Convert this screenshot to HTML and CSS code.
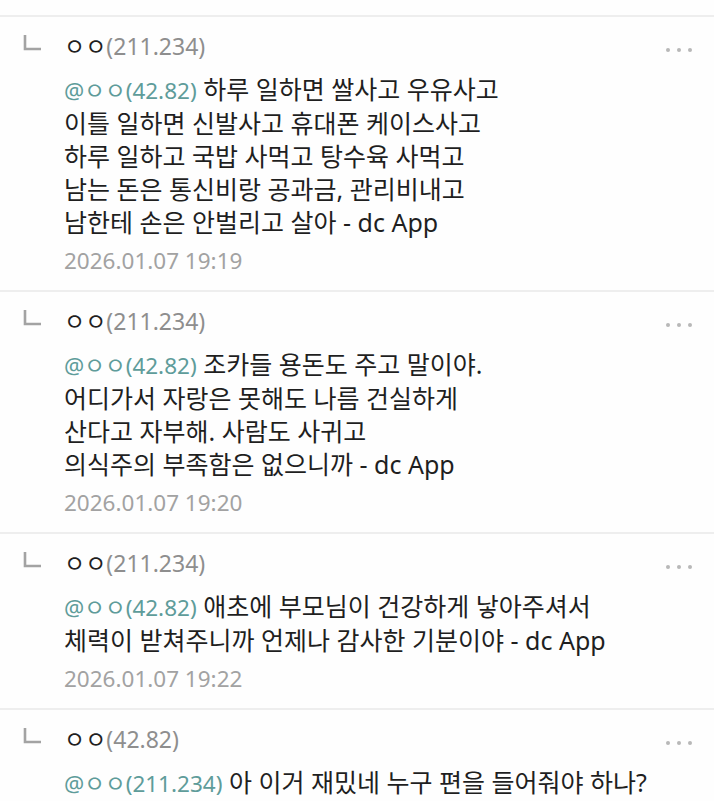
FILE: index.html
```html
<!DOCTYPE html>
<html lang="ko">
<head>
    <meta charset="UTF-8">
    <meta name="viewport" content="width=device-width, initial-scale=1.0">
    <title>댓글</title>
    <link rel="stylesheet" href="styles.css">
</head>
<body>
    <div class="prev-end"></div>

    <div class="comment">
        <svg class="reply-mark" width="20" height="18" viewBox="0 0 20 18">
            <path d="M3 1 V15 H19" fill="none" stroke="#a3a3a3" stroke-width="2.6"/>
        </svg>
        <div class="comment-main">
            <div class="comment-head">
                <div class="writer"><span class="nick">ㅇㅇ</span><span class="ip">(211.234)</span></div>
                <div class="more"><span></span><span></span><span></span></div>
            </div>
            <div class="comment-text">
                <span class="mention">@ㅇㅇ(42.82)</span> 하루 일하면 쌀사고 우유사고<br>
                이틀 일하면 신발사고 휴대폰 케이스사고<br>
                하루 일하고 국밥 사먹고 탕수육 사먹고<br>
                남는 돈은 통신비랑 공과금, 관리비내고<br>
                남한테 손은 안벌리고 살아 - dc App
            </div>
            <div class="comment-date">2026.01.07 19:19</div>
        </div>
    </div>

    <div class="comment">
        <svg class="reply-mark" width="20" height="18" viewBox="0 0 20 18">
            <path d="M3 1 V15 H19" fill="none" stroke="#a3a3a3" stroke-width="2.6"/>
        </svg>
        <div class="comment-main">
            <div class="comment-head">
                <div class="writer"><span class="nick">ㅇㅇ</span><span class="ip">(211.234)</span></div>
                <div class="more"><span></span><span></span><span></span></div>
            </div>
            <div class="comment-text">
                <span class="mention">@ㅇㅇ(42.82)</span> 조카들 용돈도 주고 말이야.<br>
                어디가서 자랑은 못해도 나름 건실하게<br>
                산다고 자부해. 사람도 사귀고<br>
                의식주의 부족함은 없으니까 - dc App
            </div>
            <div class="comment-date">2026.01.07 19:20</div>
        </div>
    </div>

    <div class="comment">
        <svg class="reply-mark" width="20" height="18" viewBox="0 0 20 18">
            <path d="M3 1 V15 H19" fill="none" stroke="#a3a3a3" stroke-width="2.6"/>
        </svg>
        <div class="comment-main">
            <div class="comment-head">
                <div class="writer"><span class="nick">ㅇㅇ</span><span class="ip">(211.234)</span></div>
                <div class="more"><span></span><span></span><span></span></div>
            </div>
            <div class="comment-text">
                <span class="mention">@ㅇㅇ(42.82)</span> 애초에 부모님이 건강하게 낳아주셔서<br>
                체력이 받쳐주니까 언제나 감사한 기분이야 - dc App
            </div>
            <div class="comment-date">2026.01.07 19:22</div>
        </div>
    </div>

    <div class="comment">
        <svg class="reply-mark" width="20" height="18" viewBox="0 0 20 18">
            <path d="M3 1 V15 H19" fill="none" stroke="#a3a3a3" stroke-width="2.6"/>
        </svg>
        <div class="comment-main">
            <div class="comment-head">
                <div class="writer"><span class="nick">ㅇㅇ</span><span class="ip">(42.82)</span></div>
                <div class="more"><span></span><span></span><span></span></div>
            </div>
            <div class="comment-text">
                <span class="mention">@ㅇㅇ(211.234)</span> 아 이거 재밌네 누구 편을 들어줘야 하나?
            </div>
            <div class="comment-date">2026.01.07 19:23</div>
        </div>
    </div>
</body>
</html>
```

FILE: styles.css
```css
body {
    margin: 0;
    padding: 0;
    background: #fefefe;
    color: #1f1f1f;
    font-family: 'Noto Sans', 'Noto Sans CJK KR', sans-serif;
    height: 801px;
    overflow: hidden;
}

.prev-end {
    height: 15px;
}

.comment {
    display: flex;
    border-top: 2px solid #eeeeee;
    padding: 13px 22px 14px 22px;
}

.reply-mark {
    flex-shrink: 0;
    margin-top: 4px;
    margin-right: 22px;
}

.comment-main {
    flex: 1;
}

.comment-head {
    display: flex;
    justify-content: space-between;
    align-items: center;
    height: 32px;
}

.writer {
    font-size: 23px;
    line-height: 32px;
    white-space: nowrap;
}

.nick {
    color: #1f1f1f;
}

.ip {
    color: #8e8e8e;
}

.more {
    display: flex;
    gap: 7px;
    margin-top: 8px;
}

.more span {
    width: 4px;
    height: 4px;
    border-radius: 50%;
    background: #b8b8b8;
}

.comment-text {
    margin-top: 11px;
    font-size: 25px;
    line-height: 33px;
    white-space: nowrap;
}

.mention {
    color: #5e9c9a;
    font-size: 22.5px;
}

.comment-date {
    margin-top: 7px;
    font-size: 22.5px;
    line-height: 30px;
    color: #a2a2a2;
}
```
